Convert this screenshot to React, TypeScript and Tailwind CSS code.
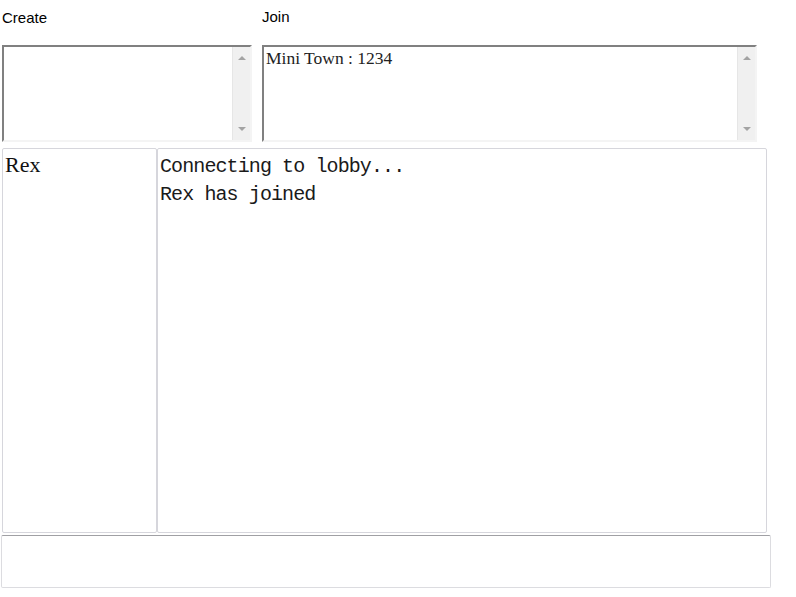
import React from "react";

function FakeScrollbar() {
  return (
    <div className="flex w-[18px] flex-col items-center justify-between border-l border-[#e6e6e6] bg-[#f0f0f0] py-[9px]">
      <div className="h-0 w-0 border-x-[4px] border-b-[4px] border-x-transparent border-b-[#a3a3a3]" />
      <div className="h-0 w-0 border-x-[4px] border-t-[4px] border-x-transparent border-t-[#a3a3a3]" />
    </div>
  );
}

function Box({ lines }: { lines: string[] }) {
  return (
    <div className="flex h-[97px] border-2 border-t-[#808080] border-l-[#808080] border-r-[#f4f4f4] border-b-[#f4f4f4] bg-white">
      <div className="flex-1 px-[2px] font-['Liberation_Serif',serif] text-[17.5px] leading-[22px] text-[#222]">
        {lines.map((l) => (
          <div key={l}>{l}</div>
        ))}
      </div>
      <FakeScrollbar />
    </div>
  );
}

export default function App() {
  const users = ["Rex"];
  const messages = ["Connecting to lobby...", "Rex has joined"];

  return (
    <div className="h-[597px] w-[796px] bg-white">
      {/* Create / Join */}
      <div className="flex gap-[10px] pl-[2px]">
        <div className="w-[250px]">
          <div className="h-[45px] pt-[9px] font-['Liberation_Sans',sans-serif] text-[15px] leading-[18px] text-black">
            Create
          </div>
          <Box lines={[]} />
        </div>
        <div className="w-[495px]">
          <div className="h-[45px] pt-[8px] font-['Liberation_Sans',sans-serif] text-[15px] leading-[18px] text-black">
            Join
          </div>
          <Box lines={["Mini Town : 1234"]} />
        </div>
      </div>

      {/* Lobby */}
      <div className="ml-[2px] mt-[6px] flex h-[385px] w-[765px]">
        <div className="w-[155px] rounded-[2px] border border-[#d6d6dc] px-[2px] pt-[2px] font-['Liberation_Serif',serif] text-[22px] leading-[28px] text-[#111]">
          {users.map((u) => (
            <div key={u}>{u}</div>
          ))}
        </div>
        <div className="flex-1 rounded-[2px] border border-[#d6d6dc] px-[2px] pt-[4px] font-['Liberation_Mono',monospace] text-[20px] leading-[28px] tracking-[-0.9px] text-[#1a1a1a]">
          {messages.map((m) => (
            <div key={m}>{m}</div>
          ))}
        </div>
      </div>

      {/* Message input */}
      <div className="ml-[1px] mt-[2px] h-[53px] w-[770px] rounded-[2px] border border-[#dcdce0] border-t-[#a0a0a4] bg-white" />
    </div>
  );
}
